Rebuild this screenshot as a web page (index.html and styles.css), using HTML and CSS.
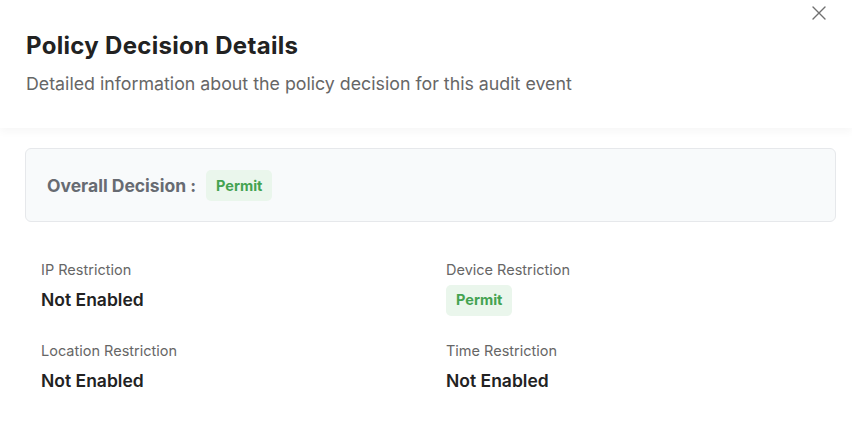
FILE: index.html
```html
<!DOCTYPE html>
<html>
<head>
<meta charset="utf-8">
<link rel="stylesheet" href="styles.css">
</head>
<body>
<div class="dialog">
  <div class="header">
    <button class="close" aria-label="Close">
      <svg width="14" height="14" viewBox="0 0 14 14"><path d="M1 1L13 13M13 1L1 13" stroke="#707070" stroke-width="1.4" stroke-linecap="round"/></svg>
    </button>
    <h1 class="title">Policy Decision Details</h1>
    <p class="subtitle">Detailed information about the policy decision for this audit event</p>
  </div>
  <div class="body">
    <div class="overall">
      <span class="overall-label">Overall Decision :</span>
      <span class="badge">Permit</span>
    </div>
    <div class="grid">
      <div class="item">
        <div class="label">IP Restriction</div>
        <div class="value">Not Enabled</div>
      </div>
      <div class="item">
        <div class="label">Device Restriction</div>
        <div class="value"><span class="badge badge-sm">Permit</span></div>
      </div>
      <div class="item">
        <div class="label">Location Restriction</div>
        <div class="value">Not Enabled</div>
      </div>
      <div class="item">
        <div class="label">Time Restriction</div>
        <div class="value">Not Enabled</div>
      </div>
    </div>
  </div>
</div>
</body>
</html>
```
FILE: styles.css
```css
* { box-sizing: border-box; }
html, body { margin: 0; padding: 0; background: #ffffff; }
body {
  font-family: "Inter", "Noto Sans", sans-serif;
  color: #222222;
  width: 852px;
  height: 446px;
  overflow: hidden;
}
.dialog { width: 852px; }
.header {
  position: relative;
  padding: 30px 26px 0 26px;
  height: 128px;
  box-shadow: 0 4px 8px rgba(0,0,0,0.035);
}
.close {
  position: absolute;
  top: 6px;
  right: 26px;
  border: 0;
  background: transparent;
  padding: 0;
  width: 14px;
  height: 14px;
  cursor: pointer;
}
.close svg { display: block; }
.title {
  margin: 0;
  font-size: 24px;
  line-height: 32px;
  font-weight: 700;
  color: #222222;
  letter-spacing: 0.3px;
}
.subtitle {
  margin: 11px 0 0 0;
  font-size: 17.8px;
  line-height: 22px;
  color: #666666;
  font-weight: 400;
}
.body { padding: 20px 16px 0 25px; }
.overall {
  display: flex;
  align-items: center;
  gap: 10px;
  height: 74px;
  padding: 0 21px;
  background: #f8fafb;
  border: 1px solid #e6e8eb;
  border-radius: 6px;
}
.overall-label {
  font-size: 17.5px;
  font-weight: 700;
  color: #676b72;
}
.badge {
  display: inline-flex;
  align-items: center;
  height: 31px;
  padding: 0 10px;
  background: #eaf6ec;
  color: #44a351;
  font-size: 14.5px;
  font-weight: 700;
  border-radius: 5px;
}
.grid {
  display: grid;
  grid-template-columns: 405px 1fr;
  row-gap: 25.5px;
  padding: 38px 0 0 16px;
}
.label {
  font-size: 14.5px;
  line-height: 20px;
  color: #666666;
}
.value {
  margin-top: 5px;
  font-size: 17.5px;
  line-height: 24px;
  font-weight: 560;
  color: #222222;
  height: 30px;
  display: flex;
  align-items: center;
}
```
